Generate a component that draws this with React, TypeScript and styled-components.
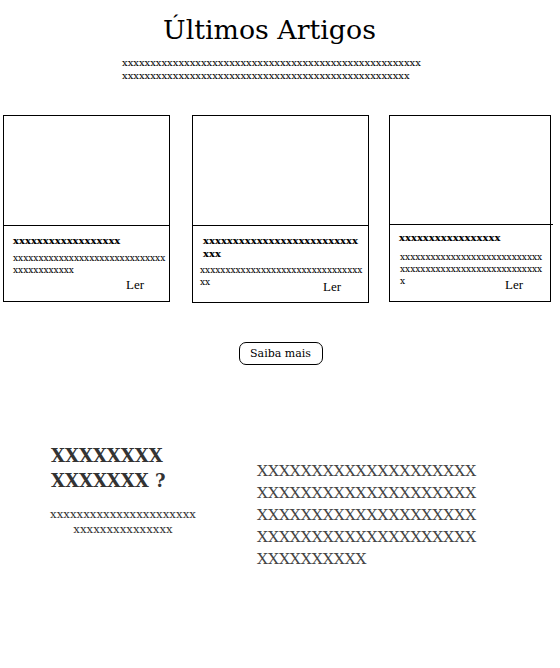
import styled, { createGlobalStyle } from "styled-components"

const GlobalStyle = createGlobalStyle`
    html, body {
        margin : 0;
        padding : 0;
        background : #fff;
    }
    body {
        font-family : "DejaVu Serif", serif;
        color : #000;
    }
`

const Page = styled.div`
    width : 560px;
    display : flex;
    flex-direction : column;
`

const Header = styled.header`
    display : flex;
    flex-direction : column;
    align-items : center;
    padding-top : 12px;
`

const Title = styled.h1`
    margin : 0 21px 0 0;
    font-family : "DejaVu Serif", serif;
    font-weight : normal;
    font-size : 26.8px;
    line-height : 36px;
`

const Intro = styled.p`
    margin : 8px 16px 0 0;
    width : 300px;
    font-size : 10px;
    line-height : 13px;
    overflow-wrap : anywhere;
`

const CardRow = styled.section`
    display : flex;
    align-items : flex-start;
    padding : 33px 0 0 3px;
`

const Card = styled.article<{ $w: number; $h: number; $gap: number }>`
    width : ${p => p.$w}px;
    height : ${p => p.$h}px;
    margin-left : ${p => p.$gap}px;
    border : 1px solid #000;
    box-sizing : border-box;
    display : flex;
    flex-direction : column;
`

const Thumb = styled.div<{ $shift: number; $h: number }>`
    height : ${p => p.$h}px;
    border-bottom : 1px solid #000;
    margin-left : ${p => Math.min(p.$shift, 0)}px;
    margin-right : ${p => Math.min(-p.$shift, 0)}px;
`

const CardBody = styled.div<{ $pt: number; $pl: number; $pr: number; $pb: number }>`
    flex : 1;
    display : grid;
    grid-template : 1fr / 1fr;
    padding : ${p => `${p.$pt}px ${p.$pr}px ${p.$pb}px ${p.$pl}px`};
`

const CardCopy = styled.div`
    grid-area : 1 / 1;
    align-self : start;
    min-width : 0;
`

const CardTitle = styled.h3<{ $indent: number; $gap: number }>`
    margin : 0 0 ${p => p.$gap}px ${p => p.$indent}px;
    font-size : 10px;
    font-weight : bold;
    line-height : 13px;
    overflow-wrap : anywhere;
`

const CardText = styled.p`
    margin : 0;
    font-size : 9px;
    line-height : 12px;
    overflow-wrap : anywhere;
`

const ReadLink = styled.a<{ $right: number }>`
    grid-area : 1 / 1;
    align-self : end;
    justify-self : end;
    margin-right : ${p => p.$right}px;
    font-family : "Liberation Serif", serif;
    font-size : 13px;
    line-height : 16px;
    color : #000;
    text-decoration : none;
`

const ButtonRow = styled.div`
    display : flex;
    justify-content : center;
    padding : 39px 0 0 1px;
`

const MoreButton = styled.button`
    width : 84px;
    height : 23px;
    border : 1px solid #000;
    border-radius : 7px;
    background : #fff;
    font-family : "DejaVu Serif", serif;
    font-size : 11px;
    color : #000;
    padding : 0;
`

const About = styled.section`
    display : flex;
    align-items : flex-start;
    padding : 78px 0 0 51px;
    gap : 56px;
`

const AboutLeft = styled.div`
    width : 150px;
    display : flex;
    flex-direction : column;
`

const AboutTitle = styled.h2`
    margin : 0;
    font-size : 18px;
    font-weight : bold;
    line-height : 25px;
    color : #333;
`

const AboutNote = styled.p`
    margin : 14px 0 0 -3px;
    width : 150px;
    font-size : 11.75px;
    line-height : 15px;
    text-align : center;
    color : #333;
    overflow-wrap : anywhere;
`

const AboutText = styled.p`
    margin : 17px 0 0 0;
    width : 224px;
    font-size : 15.4px;
    line-height : 22px;
    color : #444;
    overflow-wrap : anywhere;
`

type Article = {
    w: number
    h: number
    gap: number
    thumb: number
    shift: number
    pt: number
    pl: number
    pr: number
    pb: number
    indent: number
    titleGap: number
    title: string
    text: string
    right: number
}

const x = (n: number) => "x".repeat(n)

const articles: Article[] = [
    { w: 167, h: 187, gap: 0, thumb: 109, shift: 0, pt: 8, pl: 9, pr: 2, pb: 8, indent: 0, titleGap: 5, title: x(18), text: x(42), right: 23 },
    { w: 177, h: 188, gap: 22, thumb: 109, shift: -1, pt: 8, pl: 7, pr: 5, pb: 7, indent: 3, titleGap: 4, title: x(29), text: x(34), right: 22 },
    { w: 162, h: 187, gap: 20, thumb: 108, shift: 3, pt: 6, pl: 10, pr: 6, pb: 8, indent: -1, titleGap: 7, title: x(17), text: x(57), right: 21 },
]

export default function App() {
    return (
        <Page>
            <GlobalStyle />
            <Header>
                <Title>Últimos Artigos</Title>
                <Intro>{x(104)}</Intro>
            </Header>

            <CardRow>
                {articles.map((a, i) => (
                    <Card key={i} $w={a.w} $h={a.h} $gap={a.gap}>
                        <Thumb $shift={a.shift} $h={a.thumb} />
                        <CardBody $pt={a.pt} $pl={a.pl} $pr={a.pr} $pb={a.pb}>
                            <CardCopy>
                                <CardTitle $indent={a.indent} $gap={a.titleGap}>{a.title}</CardTitle>
                                <CardText>{a.text}</CardText>
                            </CardCopy>
                            <ReadLink href="#" $right={a.right}>Ler</ReadLink>
                        </CardBody>
                    </Card>
                ))}
            </CardRow>

            <ButtonRow>
                <MoreButton>Saiba mais</MoreButton>
            </ButtonRow>

            <About>
                <AboutLeft>
                    <AboutTitle>XXXXXXXX XXXXXXX ?</AboutTitle>
                    <AboutNote>{x(22)} {x(15)}</AboutNote>
                </AboutLeft>
                <AboutText>{"X".repeat(90)}</AboutText>
            </About>
        </Page>
    )
}
